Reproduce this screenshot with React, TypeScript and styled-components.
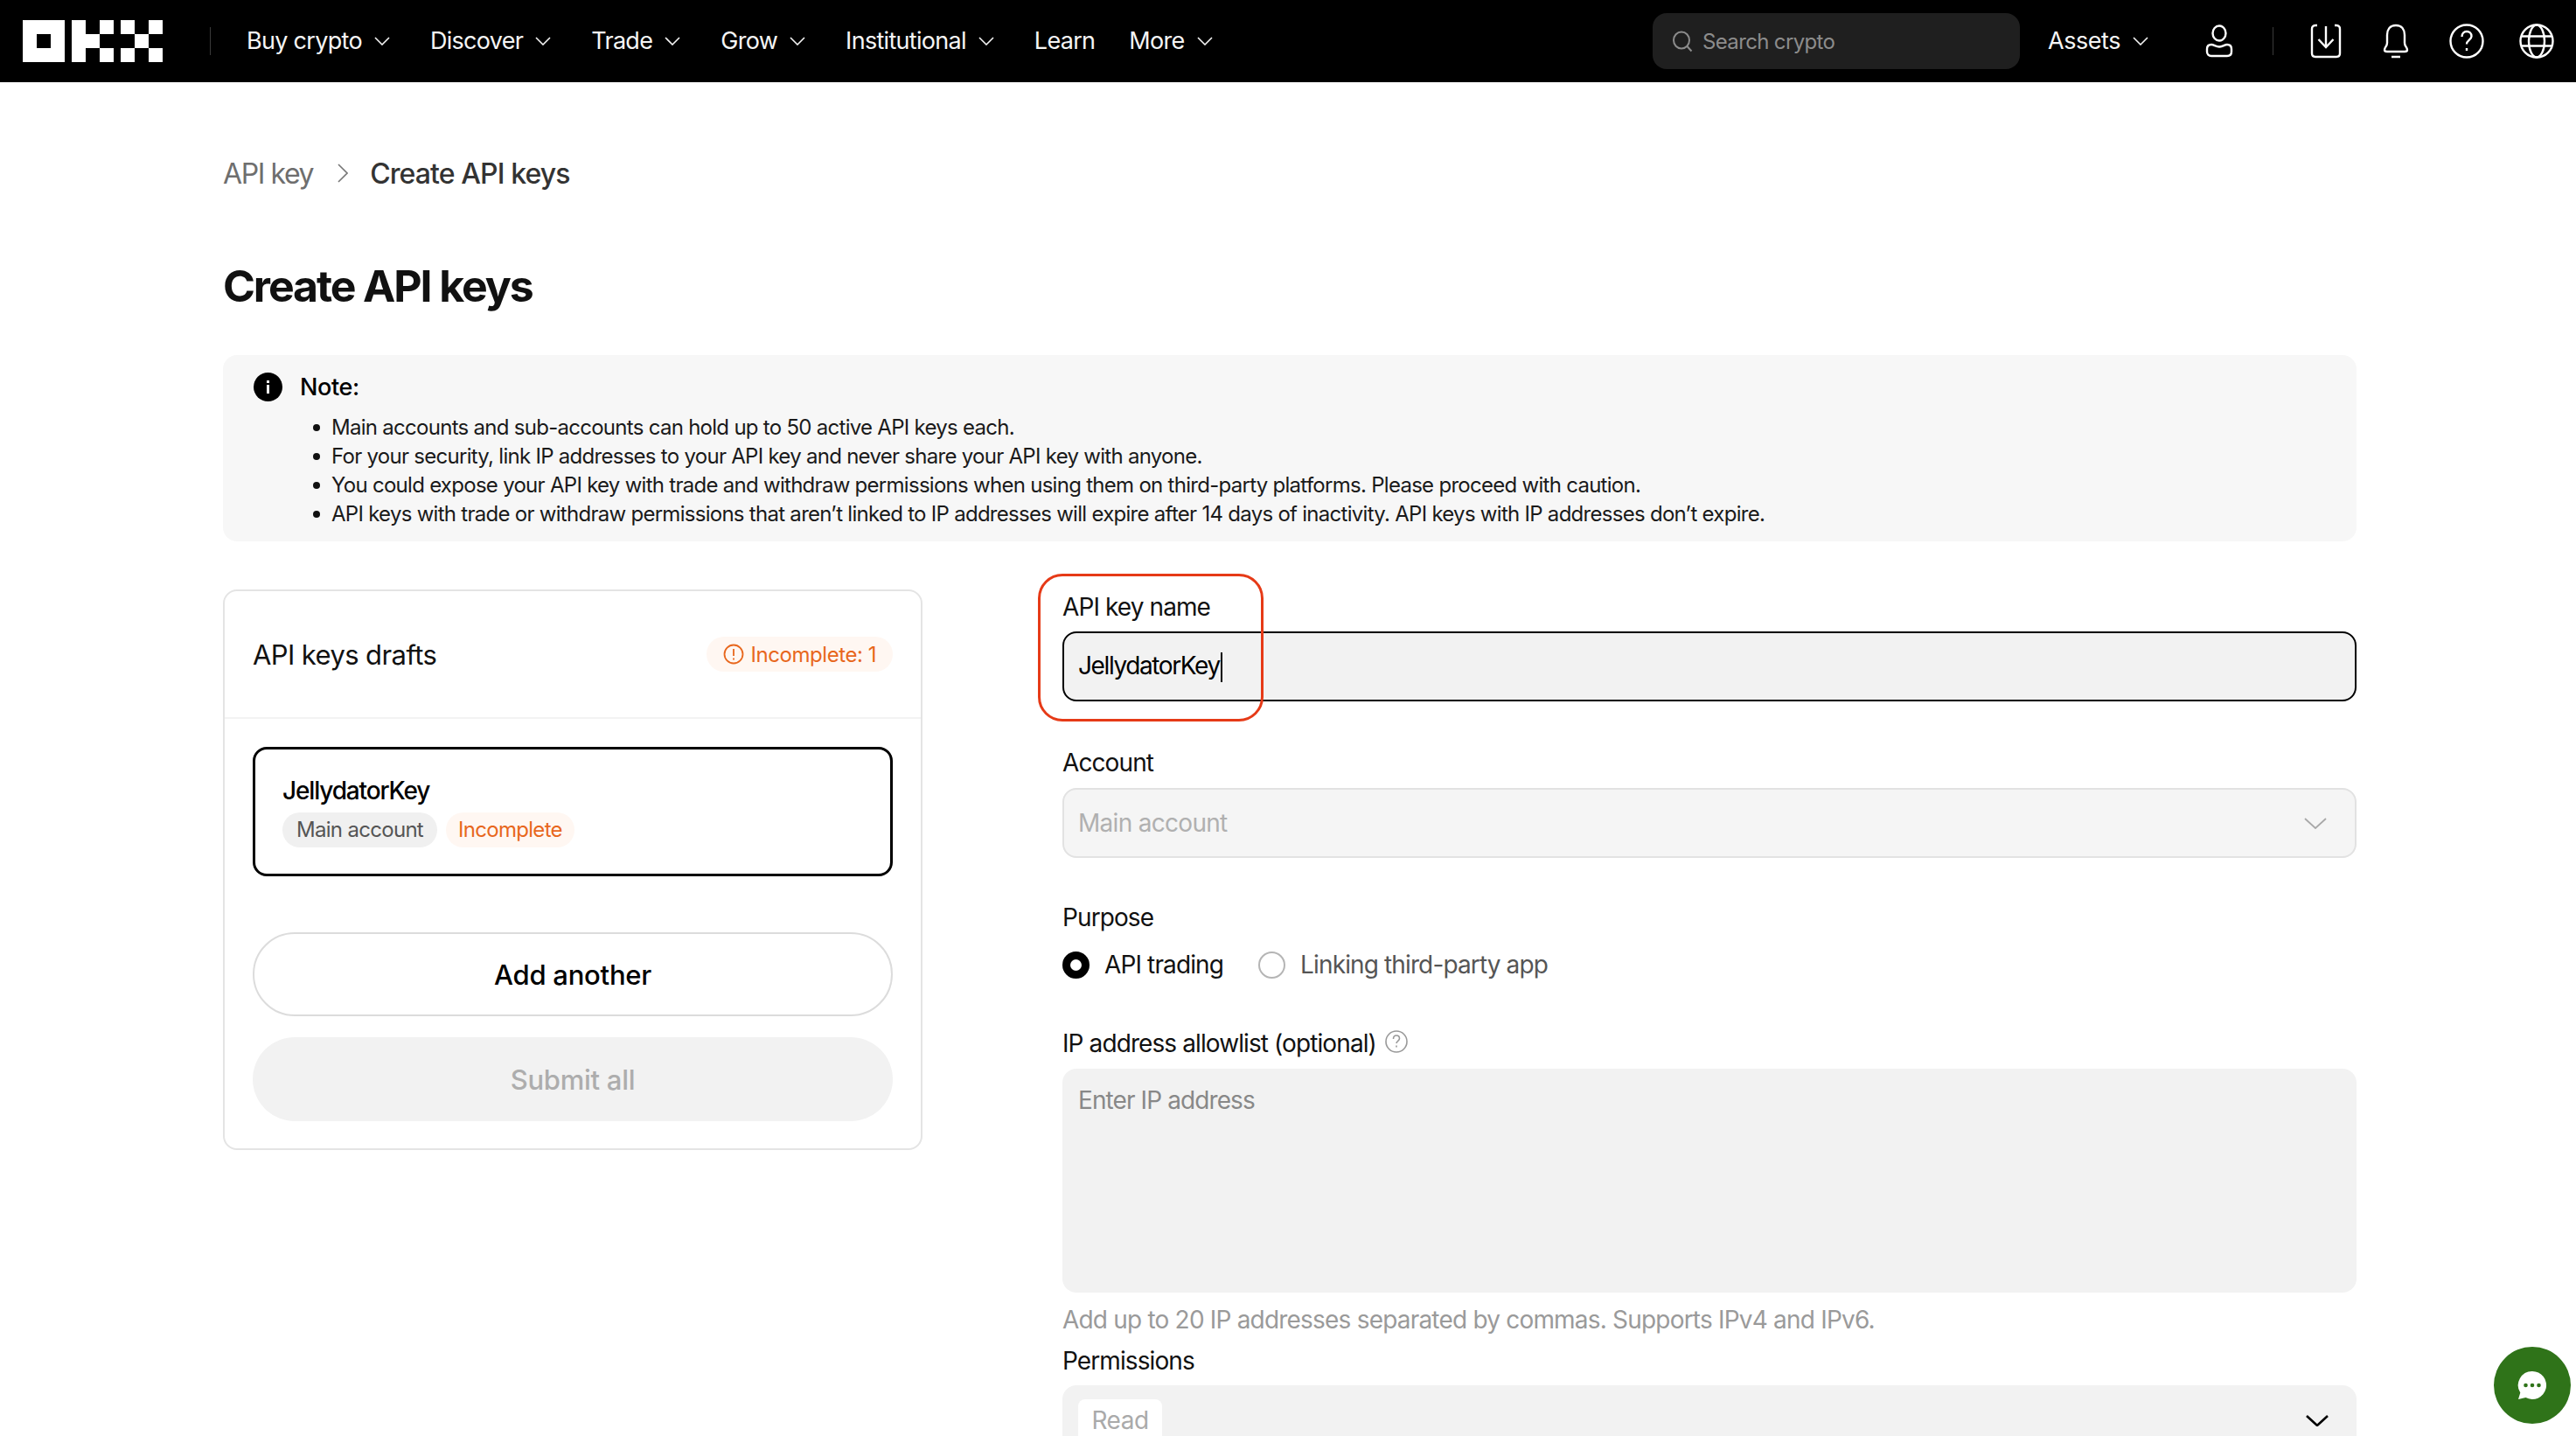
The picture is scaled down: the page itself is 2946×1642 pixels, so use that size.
import React from "react";
import styled, { createGlobalStyle } from "styled-components";

const Global = createGlobalStyle`
  html, body { margin: 0; padding: 0; background: #fff; }
  body { font-family: Inter, "Liberation Sans", sans-serif; color: #000; }
  * { box-sizing: border-box; }
`;
const Page = styled.div`width: 2946px; height: 1642px; overflow: hidden; position: relative; background: #fff;`;

const Nav = styled.header`height: 94px; background: #000; display: flex; align-items: center; padding: 0 25px 0 26px; color: #fff;`;
const LogoMark = styled.svg`width: 160px; height: 48px; flex: none;`;
const NavDivider = styled.div`width: 1px; height: 32px; background: #3a3a3a; flex: none; margin: ${p => p.$m || "0 41px 0 54px"};`;
const Menu = styled.nav`display: flex; align-items: center; gap: 46px;`;
const MenuItem = styled.div`display: flex; align-items: center; gap: 14px; font-size: 27px; letter-spacing: -0.7px; color: #f5f5f5; white-space: nowrap; line-height: 34px; margin-right: ${p => p.$mr || 0}px;`;
const Chev = styled.svg`width: 18px; height: 10px; flex: none; fill: none; stroke: currentColor; stroke-width: 1.6;`;
const NavRight = styled.div`margin-left: auto; display: flex; align-items: center;`;
const SearchBox = styled.div`width: 420px; height: 64px; background: #1f1f1f; border-radius: 16px; display: flex; align-items: center; padding-left: 22px; gap: 11px; color: #8c8c8c; font-size: 24px; letter-spacing: -0.65px;`;
const SearchIcon = styled.svg`width: 24px; height: 26px; fill: none; stroke: currentColor; stroke-width: 2;`;
const AssetsItem = styled(MenuItem)`margin: 0 64px 0 32px; letter-spacing: -0.45px;`;
const NavIcon = styled.svg`width: ${p => p.$w}px; height: 40px; fill: none; stroke: #fff; stroke-width: 2.4; flex: none; margin-right: ${p => p.$mr}px;`;

const Main = styled.main`padding: 82px 251px 0 255px;`;
const Crumbs = styled.div`display: flex; align-items: center; height: 44px; font-size: 32px;`;
const CrumbLink = styled.span`color: #6e6e6e; letter-spacing: -1.4px;`;
const CrumbSep = styled.svg`width: 12px; height: 22px; fill: none; stroke: #777; stroke-width: 1.6; margin: 0 25px 0 28px;`;
const CrumbNow = styled.span`color: #333; font-weight: 500; letter-spacing: -0.9px;`;
const Title = styled.h1`margin: 75px 0 0; height: 64px; line-height: 64px; font-size: 50px; font-weight: 700; letter-spacing: -2.12px; color: #111;`;

const Note = styled.section`margin-top: 47px; height: 213px; background: #f7f7f7; border-radius: 16px; padding: 19px 35px;`;
const NoteHead = styled.div`display: flex; align-items: center; gap: 20px; height: 34px; font-size: 27px; font-weight: 500; letter-spacing: -0.4px;`;
const NoteIcon = styled.svg`width: 33px; height: 33px; flex: none;`;
const NoteList = styled.ul`margin: 13px 0 0; padding: 0 0 0 89px; list-style: none;`;
const NoteLine = styled.li`position: relative; height: 33px; line-height: 33px; font-size: 24px; letter-spacing: -0.72px; color: #1a1a1a; white-space: nowrap;
  &::before { content: ""; position: absolute; left: -21px; top: 13px; width: 8px; height: 8px; border-radius: 50%; background: #111; }`;

const Columns = styled.div`margin-top: 55px; display: grid; grid-template-columns: 800px 1fr; column-gap: 160px; align-items: start;`;

const DraftCard = styled.section`height: 641px; border: 2px solid #e4e4e4; border-radius: 16px; padding-top: 0;`;
const DraftHead = styled.div`height: 146px; border-bottom: 2px solid #f3f3f3; display: flex; align-items: center; justify-content: space-between; padding: 0 32px;`;
const DraftTitle = styled.h2`margin: 0; font-size: 31px; font-weight: 400; letter-spacing: -0.6px; color: #111;`;
const WarnBadge = styled.div`height: 40px; border-radius: 20px; background: #fff7f2; padding: 0 19px; display: flex; align-items: center; gap: 8px; color: #e8671d; font-size: 24px; letter-spacing: -0.45px;`;
const WarnIcon = styled.svg`width: 24px; height: 24px; fill: none; stroke: currentColor; stroke-width: 1.8;`;
const DraftBody = styled.div`padding: 32px 32px 0;`;
const DraftItem = styled.div`height: 148px; border: 3px solid #000; border-radius: 16px; padding: 30px 31px 0;`;
const DraftName = styled.div`font-size: 28px; font-weight: 500; line-height: 34px; letter-spacing: -1.15px;`;
const Tags = styled.div`display: flex; gap: 10px; margin-top: 8px;`;
const Tag = styled.span`height: 40px; line-height: 40px; padding: 0 ${p => p.$warn ? "14px" : "16px"}; border-radius: 20px; font-size: 24px; letter-spacing: -0.7px; background: ${p => p.$warn ? "#fff7f2" : "#f0f0f0"}; color: ${p => p.$warn ? "#e8671d" : "#555"};`;
const PillButton = styled.button`display: flex; align-items: center; justify-content: center; width: 100%; height: 96px; border-radius: 48px; font: inherit; font-size: 31px; font-weight: 500; letter-spacing: -0.25px; margin-top: ${p => p.$mt}px; padding: 0;
  border: ${p => p.$ghost ? "2px solid #dcdcdc" : "none"}; background: ${p => p.$ghost ? "#fff" : "#f2f2f2"}; color: ${p => p.$ghost ? "#000" : "#adadad"};`;

const FormCol = styled.div`padding-top: 4px;`;
const Field = styled.div`position: relative; margin-top: ${p => p.$mt || 0}px;`;
const Label = styled.label`display: flex; align-items: center; gap: 10px; height: 34px; padding-bottom: 2px; font-size: 28px; letter-spacing: -0.9px; color: #111; white-space: nowrap;`;
const HelpMini = styled.svg`width: 26px; height: 26px; fill: none; stroke: #999; stroke-width: 1.6; margin-top: -4px;`;
const Control = styled.div`display: flex; align-items: center; justify-content: space-between; height: ${p => p.$h}px; margin-top: ${p => p.$mt ?? 10}px; padding: 0 16px; border-radius: 16px; font-size: 28px; letter-spacing: -0.7px; background: ${p => p.$bg || "#f2f2f2"}; border: ${p => p.$border || "none"}; color: ${p => p.$color || "#000"};`;
const TypedText = styled.span`letter-spacing: -1.4px;`;
const Caret = styled.span`display: inline-block; width: 2px; height: 34px; background: #000; vertical-align: middle; margin-left: 1px;`;
const TextArea = styled(Control)`align-items: flex-start; padding: 19px 18px 0; color: #888; letter-spacing: -0.9px;`;
const SelectChev = styled.svg`width: 26px; height: 13px; fill: none; stroke: ${p => p.$c}; stroke-width: ${p => p.$sw}; margin: ${p => p.$top ? "34px 16px 0 0" : "0 16px 0 0"}; align-self: ${p => p.$top ? "flex-start" : "center"}; flex: none;`;
const Callout = styled.div`position: absolute; left: -28px; top: -22px; width: 258px; height: 169px; border: 3px solid #e63a17; border-radius: 28px; pointer-events: none;`;
const RadioRow = styled.div`display: flex; align-items: center; height: 32px; margin-top: 20px; font-size: 28px; letter-spacing: -0.87px;`;
const Radio = styled.span`width: 31px; height: 31px; border-radius: 50%; flex: none; background: #fff; border: ${p => p.$on ? "9px solid #000" : "2px solid #b5b5b5"}; margin-right: 17px;`;
const RadioText = styled.span`color: ${p => p.$muted ? "#555" : "#111"}; margin-right: 40px;`;
const Hint = styled.div`height: 34px; line-height: 34px; margin-top: 14px; font-size: 28px; letter-spacing: -0.8px; color: #9a9a9a; white-space: nowrap;`;
const ReadChip = styled.span`display: flex; align-items: center; justify-content: center; width: 96px; height: 60px; margin: 16px 0 0 2px; padding-bottom: 12px; align-self: flex-start; flex: none; background: #fff; border-radius: 8px; color: #aaa; font-size: 28px; line-height: 32px; letter-spacing: -0.5px;`;
const ChatButton = styled.button`position: absolute; left: 2852px; top: 1540px; width: 88px; height: 88px; border: none; padding: 0; border-radius: 50%; background: #2f7319; display: flex; align-items: center; justify-content: center;`;
const ChatIcon = styled.svg`width: 34px; height: 34px;`;

const Chevron = () => <Chev viewBox="0 0 18 10"><path d="M1 1l8 8 8-8" /></Chev>;
const NAV = ["Buy crypto", "Discover", "Trade", "Grow", "Institutional"];

export default function App() {
  return (
    <Page>
      <Global />
      <Nav>
        <LogoMark viewBox="0 0 160 48" fill="#fff">
          <path fillRule="evenodd" d="M0 0h48v48H0zM16 16v16h16V16z" />
          <path d="M56 0h16v48H56zM72 16h16v16H72zM88 0h16v16H88zM88 32h16v16H88zM112 0h16v16h-16zM112 32h16v16h-16zM128 16h16v16h-16zM144 0h16v16h-16zM144 32h16v16h-16z" />
        </LogoMark>
        <NavDivider />
        <Menu>
          {NAV.map(n => <MenuItem key={n}>{n}<Chevron /></MenuItem>)}
          <MenuItem $mr={-7}>Learn</MenuItem>
          <MenuItem>More<Chevron /></MenuItem>
        </Menu>
        <NavRight>
          <SearchBox>
            <SearchIcon viewBox="0 0 24 26"><ellipse cx="11" cy="12" rx="9" ry="9.5" /><path d="M17.5 19l5 5.5" /></SearchIcon>
            Search crypto
          </SearchBox>
          <AssetsItem>Assets<Chevron /></AssetsItem>
          <NavIcon $w={34} $mr={0} viewBox="0 0 34 40">
            <ellipse cx="17" cy="11" rx="7.5" ry="8.5" />
            <path d="M3 29c0-3 2-5 5-5 3 0 5 2.500 9 2.500s6-2.500 9-2.500c3 0 5 2 5 5v3c0 3-2 5-5 5H8c-3 0-5-2-5-5z" />
          </NavIcon>
          <NavDivider $m="0 42px 0 44px" />
          <NavIcon $w={36} $mr={45} viewBox="0 0 36 40">
            <path d="M8 2H6C3 2 2 4 2 6v28c0 2 1 4 4 4h24c3 0 4-2 4-4V6c0-2-1-4-4-4h-2M18 3v23M9.500 18l8.500 9 8.500-9" />
          </NavIcon>
          <NavIcon $w={34} $mr={44} viewBox="0 0 34 40">
            <path d="M17 2C10 2 7 7 7 13v9c0 4-3 5-3 8 0 1.500 1 2 3 2h20c2 0 3-.5 3-2 0-3-3-4-3-8v-9c0-6-3-11-10-11zM12 38h10" />
          </NavIcon>
          <NavIcon $w={40} $mr={40} viewBox="0 0 40 40">
            <circle cx="20" cy="20" r="18.500" />
            <path d="M14.500 15c0-4 2.500-6 5.500-6s5.500 2 5.500 5.500c0 4-5.500 4.500-5.500 9" />
            <path d="M20 28v3" />
          </NavIcon>
          <NavIcon $w={40} $mr={0} viewBox="0 0 40 40">
            <circle cx="20" cy="20" r="18.500" />
            <ellipse cx="20" cy="20" rx="9" ry="18.500" />
            <path d="M2 14.500h36M2 25.500h36" />
          </NavIcon>
        </NavRight>
      </Nav>

      <Main>
        <Crumbs>
          <CrumbLink>API key</CrumbLink>
          <CrumbSep viewBox="0 0 12 22"><path d="M1 1l10 10L1 21" /></CrumbSep>
          <CrumbNow>Create API keys</CrumbNow>
        </Crumbs>
        <Title>Create API keys</Title>

        <Note>
          <NoteHead>
            <NoteIcon viewBox="0 0 33 33">
              <circle cx="16.500" cy="16.500" r="16.500" fill="#000" />
              <rect x="15" y="14" width="3" height="10" fill="#fff" />
              <rect x="15" y="9" width="3" height="3" fill="#fff" />
            </NoteIcon>
            Note:
          </NoteHead>
          <NoteList>
            <NoteLine>Main accounts and sub-accounts can hold up to 50 active API keys each.</NoteLine>
            <NoteLine>For your security, link IP addresses to your API key and never share your API key with anyone.</NoteLine>
            <NoteLine>You could expose your API key with trade and withdraw permissions when using them on third-party platforms. Please proceed with caution.</NoteLine>
            <NoteLine>API keys with trade or withdraw permissions that aren’t linked to IP addresses will expire after 14 days of inactivity. API keys with IP addresses don’t expire.</NoteLine>
          </NoteList>
        </Note>

        <Columns>
          <DraftCard>
            <DraftHead>
              <DraftTitle>API keys drafts</DraftTitle>
              <WarnBadge>
                <WarnIcon viewBox="0 0 24 24"><circle cx="12" cy="12" r="10.500" /><path d="M12 6v8M12 16.500v2" /></WarnIcon>
                Incomplete: 1
              </WarnBadge>
            </DraftHead>
            <DraftBody>
              <DraftItem>
                <DraftName>JellydatorKey</DraftName>
                <Tags>
                  <Tag>Main account</Tag>
                  <Tag $warn>Incomplete</Tag>
                </Tags>
              </DraftItem>
              <PillButton $ghost $mt={64}>Add another</PillButton>
              <PillButton $mt={24}>Submit all</PillButton>
            </DraftBody>
          </DraftCard>

          <FormCol>
            <Field>
              <Label>API key name</Label>
              <Control $h={80} $border="2.5px solid #000"><TypedText>JellydatorKey<Caret /></TypedText></Control>
              <Callout />
            </Field>
            <Field $mt={54}>
              <Label>Account</Label>
              <Control $h={80} $mt={11} $bg="#f5f5f5" $border="2px solid #e2e2e2" $color="#b0b0b0">
                Main account
                <SelectChev $c="#a8a8a8" $sw={1.8} viewBox="0 0 26 13"><path d="M1 1l12 11L25 1" /></SelectChev>
              </Control>
            </Field>
            <Field $mt={52}>
              <Label>Purpose</Label>
              <RadioRow>
                <Radio $on /><RadioText>API trading</RadioText>
                <Radio /><RadioText $muted>Linking third-party app</RadioText>
              </RadioRow>
            </Field>
            <Field $mt={58}>
              <Label>
                IP address allowlist (optional)
                <HelpMini viewBox="0 0 26 26"><circle cx="13" cy="13" r="12" /><path d="M9.500 10c0-2.500 1.500-4 3.500-4s3.500 1.300 3.500 3.500c0 2.700-3.500 3-3.500 5.500M13 17.500v2" /></HelpMini>
              </Label>
              <TextArea $h={256} $mt={11}>Enter IP address</TextArea>
            </Field>
            <Hint>Add up to 20 IP addresses separated by commas. Supports IPv4 and IPv6.</Hint>
            <Field $mt={14}>
              <Label>Permissions</Label>
              <Control $h={120} $mt={10}>
                <ReadChip>Read</ReadChip>
                <SelectChev $top $c="#000" $sw={2.6} viewBox="0 0 26 13"><path d="M1 1l12 11L25 1" /></SelectChev>
              </Control>
            </Field>
          </FormCol>
        </Columns>
      </Main>

      <ChatButton aria-label="Chat">
        <ChatIcon viewBox="0 0 34 34">
          <path d="M17 1a16 16 0 1 1-7.500 30.100L1 33l2.300-7.400A16 16 0 0 1 17 1z" fill="#fff" />
          <circle cx="9.500" cy="17" r="2.300" fill="#2f7319" />
          <circle cx="17" cy="17" r="2.300" fill="#2f7319" />
          <circle cx="24.500" cy="17" r="2.300" fill="#2f7319" />
        </ChatIcon>
      </ChatButton>
    </Page>
  );
}
